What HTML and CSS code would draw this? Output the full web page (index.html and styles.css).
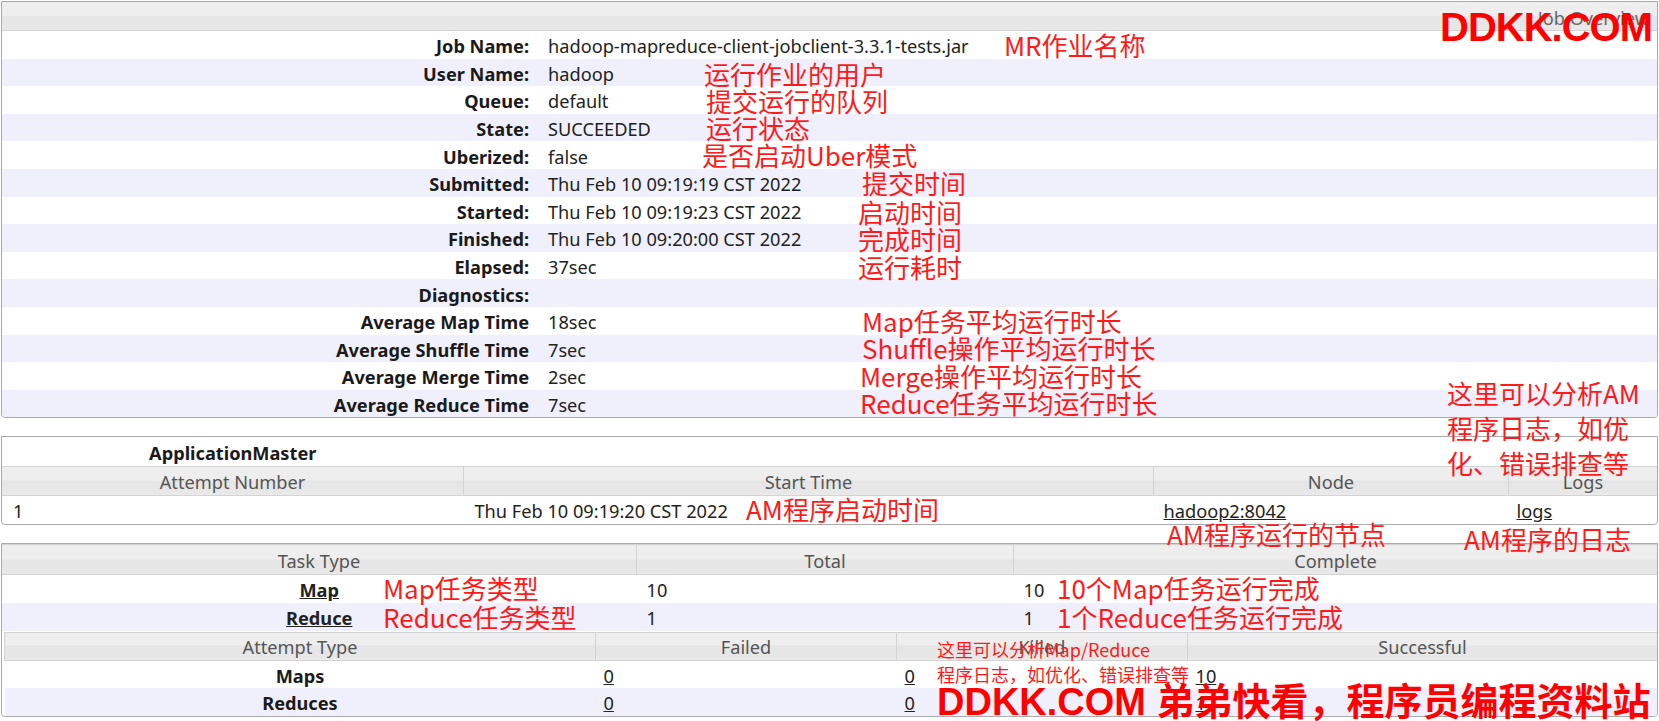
FILE: index.html
```html
<!DOCTYPE html>
<html lang="zh-CN">
<head>
    <meta charset="utf-8">
    <title>Job Overview</title>
    <link rel="stylesheet" href="styles.css">
</head>
<body>
    <div class="panel overview">
        <div class="panel-head">Job Overview</div>
        <table class="info">
            <tr><th>Job Name:</th><td>hadoop-mapreduce-client-jobclient-3.3.1-tests.jar</td></tr>
            <tr class="odd"><th>User Name:</th><td>hadoop</td></tr>
            <tr><th>Queue:</th><td>default</td></tr>
            <tr class="odd"><th>State:</th><td>SUCCEEDED</td></tr>
            <tr><th>Uberized:</th><td>false</td></tr>
            <tr class="odd"><th>Submitted:</th><td>Thu Feb 10 09:19:19 CST 2022</td></tr>
            <tr><th>Started:</th><td>Thu Feb 10 09:19:23 CST 2022</td></tr>
            <tr class="odd"><th>Finished:</th><td>Thu Feb 10 09:20:00 CST 2022</td></tr>
            <tr><th>Elapsed:</th><td>37sec</td></tr>
            <tr class="odd"><th>Diagnostics:</th><td></td></tr>
            <tr><th>Average Map Time</th><td>18sec</td></tr>
            <tr class="odd"><th>Average Shuffle Time</th><td>7sec</td></tr>
            <tr><th>Average Merge Time</th><td>2sec</td></tr>
            <tr class="odd"><th>Average Reduce Time</th><td>7sec</td></tr>
        </table>
    </div>

    <div class="panel">
        <table class="grid am">
            <tr class="caption-row"><th class="caption">ApplicationMaster</th><th colspan="3"></th></tr>
            <tr class="head">
                <th class="c-attempt">Attempt Number</th>
                <th class="c-start">Start Time</th>
                <th class="c-node">Node</th>
                <th>Logs</th>
            </tr>
            <tr class="data">
                <td>1</td>
                <td>Thu Feb 10 09:19:20 CST 2022</td>
                <td><a href="#">hadoop2:8042</a></td>
                <td><a href="#">logs</a></td>
            </tr>
        </table>
    </div>

    <div class="panel">
        <table class="grid tasks">
            <tr class="head">
                <th class="c-type">Task Type</th>
                <th class="c-total">Total</th>
                <th>Complete</th>
            </tr>
            <tr class="data">
                <th><a href="#">Map</a></th>
                <td>10</td>
                <td>10</td>
            </tr>
            <tr class="data odd">
                <th><a href="#">Reduce</a></th>
                <td>1</td>
                <td>1</td>
            </tr>
            <tr>
                <td colspan="3" class="nested">
                    <table class="grid attempts">
                        <tr class="head">
                            <th class="c-atype">Attempt Type</th>
                            <th class="c-failed">Failed</th>
                            <th class="c-killed">Killed</th>
                            <th>Successful</th>
                        </tr>
                        <tr class="data">
                            <th>Maps</th>
                            <td><a href="#">0</a></td>
                            <td><a href="#">0</a></td>
                            <td><a href="#">10</a></td>
                        </tr>
                        <tr class="data odd">
                            <th>Reduces</th>
                            <td><a href="#">0</a></td>
                            <td><a href="#">0</a></td>
                            <td><a href="#">1</a></td>
                        </tr>
                    </table>
                </td>
            </tr>
        </table>
    </div>

    <!-- 红色批注 -->
    <div class="note n-jobname">MR作业名称</div>
    <div class="note n-user">运行作业的用户</div>
    <div class="note n-queue">提交运行的队列</div>
    <div class="note n-state">运行状态</div>
    <div class="note n-uber">是否启动Uber模式</div>
    <div class="note n-submit">提交时间</div>
    <div class="note n-start">启动时间</div>
    <div class="note n-finish">完成时间</div>
    <div class="note n-elapsed">运行耗时</div>
    <div class="note n-map">Map任务平均运行时长</div>
    <div class="note n-shuffle">Shuffle操作平均运行时长</div>
    <div class="note n-merge">Merge操作平均运行时长</div>
    <div class="note n-reduce">Reduce任务平均运行时长</div>
    <div class="note n-amlog">这里可以分析AM<br>程序日志，如优<br>化、错误排查等</div>
    <div class="note n-amstart">AM程序启动时间</div>
    <div class="note n-amnode">AM程序运行的节点</div>
    <div class="note n-amlogs">AM程序的日志</div>
    <div class="note n-maptype">Map任务类型</div>
    <div class="note n-redtype">Reduce任务类型</div>
    <div class="note n-mapdone">10个Map任务运行完成</div>
    <div class="note n-reddone">1个Reduce任务运行完成</div>
    <div class="note small n-tasklog">这里可以分析Map/Reduce<br>程序日志，如优化、错误排查等</div>

    <div class="mark mark-top">DDKK.COM</div>
    <div class="mark mark-bottom">DDKK.COM 弟弟快看，程序员编程资料站</div>
</body>
</html>
```

FILE: styles.css
```css
body {
    margin: 0;
    padding: 1px 1px 0 1px;
    font-family: "Noto Sans", "Noto Sans CJK SC", sans-serif;
    font-size: 18.2px;
    color: #222;
    background: #fff;
    position: relative;
    height: 720px;
    overflow: hidden;
}

a {
    color: #222;
    text-decoration: underline;
}

.panel {
    border: 1px solid #aaa;
    border-radius: 0 0 4px 4px;
    margin-bottom: 18px;
    overflow: hidden;
}

.panel-head {
    height: 28px;
    line-height: 32px;
    text-align: right;
    padding-right: 8px;
    color: #666;
    background: linear-gradient(#eeeeee 0, #eeeeee 50%, #e5e5e5 50%, #e8e8e8 100%);
    border-bottom: 1px solid #d3d3d3;
}

table {
    border-collapse: collapse;
    width: 100%;
}

.info tr {
    height: 27.6px;
}

.info th,
.info td {
    padding-top: 3px;
    padding-bottom: 0;
    line-height: 24px;
}

.info th {
    width: 527px;
    text-align: right;
    font-weight: bold;
    color: #1a1a1a;
    padding-left: 0;
    padding-right: 0;
    white-space: nowrap;
}

.info td {
    padding-left: 19px;
    padding-right: 0;
}

.odd th,
.odd td {
    background: #f0f0fc;
}

.grid th,
.grid td {
    padding: 2px 0 0 0;
    line-height: 22px;
    white-space: nowrap;
}

.grid .head th {
    font-weight: normal;
    color: #555;
    background: linear-gradient(#eeeeee 0, #eeeeee 50%, #e5e5e5 50%, #e8e8e8 100%);
    border: 1px solid #d3d3d3;
}

.grid .head th:first-child {
    border-left: none;
}

.grid .head th:last-child {
    border-right: none;
}

.grid .data td {
    text-align: left;
    padding-left: 10px;
}

.grid .data th {
    font-weight: bold;
    text-align: center;
    color: #1a1a1a;
}

.caption-row th {
    font-weight: bold;
    color: #1a1a1a;
}

.am .caption-row { height: 29px; }
.am .head { height: 29px; }
.am .data { height: 29px; }

.am .data td:first-child,
.am .data td:nth-child(2) {
    padding-left: 11px;
}

.am .data td:last-child {
    padding-left: 8px;
}

.c-attempt { width: 461px; }
.c-start { width: 689px; }
.c-node { width: 354px; }

.tasks > tbody > .head { height: 30px; }
.tasks > tbody > .data { height: 28px; }

.c-type { width: 634px; }
.c-total { width: 376px; }

.grid td.nested {
    padding: 1px 0 0 2px;
}

.attempts .head { height: 28px; }
.attempts .data { height: 28px; }

.attempts .head th:first-child {
    border-left: 1px solid #d3d3d3;
}

.c-atype { width: 590px; }
.c-failed { width: 300px; }
.c-killed { width: 290px; }

.attempts .data td {
    padding-left: 8px;
}

/* 批注 */
.note {
    position: absolute;
    font-family: "Noto Sans CJK SC", sans-serif;
    font-size: 26px;
    line-height: 30px;
    color: #ff1a1a;
    white-space: nowrap;
}

.note.small {
    font-size: 18px;
    line-height: 25px;
}

.n-jobname { left: 1004px; top: 30px; }
.n-user { left: 704px; top: 59px; }
.n-queue { left: 706px; top: 86px; }
.n-state { left: 706px; top: 113px; }
.n-uber { left: 702px; top: 140px; }
.n-submit { left: 862px; top: 168px; }
.n-start { left: 858px; top: 197px; }
.n-finish { left: 858px; top: 224px; }
.n-elapsed { left: 858px; top: 252px; }
.n-map { left: 862px; top: 306px; }
.n-shuffle { left: 862px; top: 333px; }
.n-merge { left: 860px; top: 361px; }
.n-reduce { left: 860px; top: 388px; }
.n-amlog { left: 1447px; top: 375px; line-height: 35px; }
.n-amstart { left: 746px; top: 494px; }
.n-amnode { left: 1167px; top: 519px; }
.n-amlogs { left: 1464px; top: 524px; }
.n-maptype { left: 383px; top: 573px; }
.n-redtype { left: 383px; top: 602px; }
.n-mapdone { left: 1057px; top: 573px; }
.n-reddone { left: 1057px; top: 602px; }
.n-tasklog { left: 937px; top: 637px; }

.mark {
    position: absolute;
    font-family: "Liberation Sans", "Noto Sans CJK SC", sans-serif;
    font-weight: bold;
    color: #ff0000;
    white-space: nowrap;
}

.mark-top {
    left: 1440px;
    top: 4px;
    font-size: 40px;
    line-height: 46px;
    letter-spacing: -1px;
}

.mark-bottom {
    left: 937px;
    top: 680px;
    font-size: 38px;
    line-height: 44px;
}
```
